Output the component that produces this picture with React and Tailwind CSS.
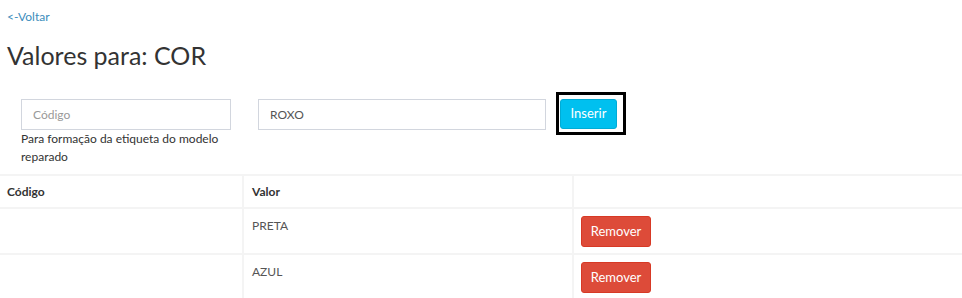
import React, { useState } from 'react';

const VALORES = [
    { id: 1, codigo: '', valor: 'PRETA' },
    { id: 2, codigo: '', valor: 'AZUL' },
];

const App = () => {
    const [codigo, setCodigo] = useState('');
    const [valor, setValor] = useState('ROXO');

    return (
        <div className="min-h-screen bg-white text-[#333] font-['Lato',sans-serif]">
            <div className="px-[7px] pt-[10px]">
                <a href="#" className="block text-[12px] leading-[14px] text-[#3c8dbc]">&lt;-Voltar</a>
                <h1 className="mt-[16px] text-[25px] leading-[30px] text-[#333]">Valores para: COR</h1>
            </div>

            <div className="mt-[29px] flex items-start pl-[21px]">
                <div className="w-[210px]">
                    <input
                        value={codigo}
                        onChange={e => setCodigo(e.target.value)}
                        placeholder="Código"
                        className="w-full h-[31px] px-[11px] border border-[#d2d6de] text-[12px] text-[#555] placeholder:text-[#999] outline-none"
                    />
                    <p className="w-[222px] text-[12px] leading-[18px] text-[#333]">Para formação da etiqueta do modelo reparado</p>
                </div>
                <input
                    value={valor}
                    onChange={e => setValor(e.target.value)}
                    className="ml-[27px] w-[288px] h-[31px] px-[11px] border border-[#d2d6de] text-[12px] text-[#555] outline-none"
                />
                <div className="ml-[10px] -mt-[7px] w-[70px] h-[43px] border-[3px] border-black pl-[1px] pt-[4px]">
                    <button className="w-[57px] h-[30px] bg-[#00c0ef] border border-[#00acd6] rounded-[3px] text-white text-[13px]">Inserir</button>
                </div>
            </div>

            <table className="mt-[8px] w-full border-collapse text-[12px]">
                <thead>
                    <tr className="border-t-2 border-[#f4f4f4]">
                        <th className="w-[243px] h-[33px] px-[7px] text-left font-bold border-r-2 border-[#f4f4f4]">Código</th>
                        <th className="w-[330px] px-[8px] text-left font-bold border-r-2 border-[#f4f4f4]">Valor</th>
                        <th></th>
                    </tr>
                </thead>
                <tbody>
                    {VALORES.map(v => (
                        <tr key={v.id} className="border-t-2 border-[#f4f4f4]">
                            <td className="h-[46px] px-[7px] align-top border-r-2 border-[#f4f4f4]">{v.codigo}</td>
                            <td className="px-[8px] pt-[8px] align-top text-[#555] border-r-2 border-[#f4f4f4]">{v.valor}</td>
                            <td className="px-[7px] pt-[7px] align-top">
                                <button className="w-[70px] h-[31px] bg-[#dd4b39] border border-[#d73925] rounded-[3px] text-white text-[13px]">Remover</button>
                            </td>
                        </tr>
                    ))}
                </tbody>
            </table>
        </div>
    );
};

export default App;
